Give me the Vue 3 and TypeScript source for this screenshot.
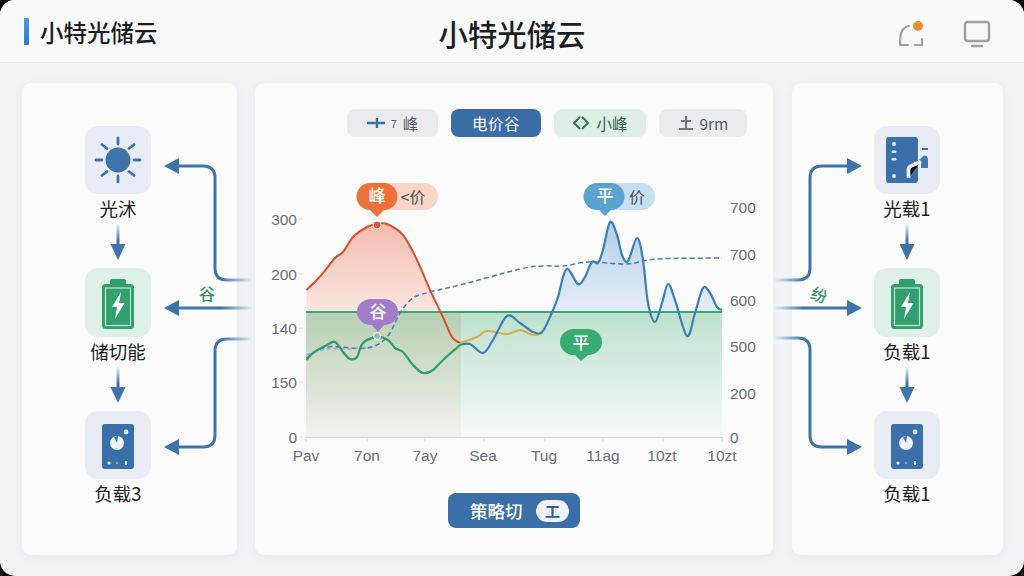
<template>
  <div class="screen">
    <header class="topbar">
      <div class="brand">
        <span class="brand-bar"></span>
        <span class="brand-name">小特光储云</span>
      </div>
      <h1 class="page-title">小特光储云</h1>
      <div class="top-actions">
        <svg class="top-icon" viewBox="0 0 28 28" width="28" height="28" fill="none" stroke="#9aa0a8" stroke-width="2.2" stroke-linecap="round">
          <path d="M3 24 Q3 15 5 11 Q7 7 12 6" />
          <path d="M3 25 H11" />
          <path d="M18 25 H25 V19" />
          <circle cx="21" cy="6" r="5" fill="#ee8f2f" stroke="none" />
        </svg>
        <svg class="top-icon" viewBox="0 0 28 28" width="28" height="28" fill="none" stroke="#9aa0a8" stroke-width="2.4">
          <rect x="2" y="2" width="24" height="19" rx="2.5" />
          <path d="M9 26 H19" stroke-linecap="round" />
        </svg>
      </div>
    </header>

    <main class="board">
      <section class="panel panel-left">
        <template v-for="(node, i) in leftNodes" :key="node.label + i">
          <div class="node-icon" :class="[node.tone, { tall: i === 1 }]">
            <svg viewBox="0 0 66 66" width="66" height="66">
              <use :href="'#' + node.icon" />
            </svg>
          </div>
          <div class="node-label">{{ node.label }}</div>
          <svg v-if="i < leftNodes.length - 1" class="down-arrow" viewBox="0 0 18 36" width="18" height="36">
            <rect x="7.5" y="0" width="3" height="21" fill="url(#fadeDown)" />
            <path d="M1.5 20 H16.5 L9 36 Z" fill="#3f73ab" />
          </svg>
        </template>
      </section>

      <section class="panel-center">
        <div class="chips">
          <div class="chip chip-grey">
            <svg viewBox="0 0 18 12" width="18" height="12"><path d="M0 6 H18 M10 1 V11" stroke="#3f6f9f" stroke-width="2.4" fill="none" /></svg>
            <span class="chip-small">7</span><span>峰</span>
          </div>
          <div class="chip chip-blue">电价谷</div>
          <div class="chip chip-green">
            <svg viewBox="0 0 18 16" width="18" height="16"><path d="M8 2 L2 8 L8 14 M10 2 L16 8 L10 14" stroke="#2c7a55" stroke-width="2" fill="none" /></svg>
            <span>小峰</span>
          </div>
          <div class="chip chip-grey">
            <svg viewBox="0 0 16 16" width="16" height="16"><path d="M8 1 V14 M3 6 H13 M1 14 H15" stroke="#6f7780" stroke-width="2" fill="none" /></svg>
            <span>9rm</span>
          </div>
        </div>

        <svg class="chart" viewBox="255 170 518 305" width="518" height="305">
          <defs>
            <linearGradient id="redFill" gradientUnits="userSpaceOnUse" x1="0" y1="224" x2="0" y2="312">
              <stop offset="0" stop-color="#f3bcae" />
              <stop offset="1" stop-color="#f9e6e1" />
            </linearGradient>
            <linearGradient id="blueFill" gradientUnits="userSpaceOnUse" x1="0" y1="222" x2="0" y2="312">
              <stop offset="0" stop-color="#b4cde8" />
              <stop offset="1" stop-color="#e6eef7" />
            </linearGradient>
            <linearGradient id="oliveFill" x1="0" y1="0" x2="0" y2="1">
              <stop offset="0" stop-color="#b8cfb2" />
              <stop offset="1" stop-color="#f3f1ee" />
            </linearGradient>
            <linearGradient id="mintFill" x1="0" y1="0" x2="0" y2="1">
              <stop offset="0" stop-color="#bde0cd" />
              <stop offset="1" stop-color="#f6fafa" />
            </linearGradient>
            <clipPath id="aboveBase"><rect x="306" y="170" width="416" height="142" /></clipPath>
          </defs>

          <rect x="306" y="312" width="155" height="125" fill="url(#oliveFill)" />
          <rect x="461" y="312" width="261" height="125" fill="url(#mintFill)" />
          <path :d="redArea" fill="url(#redFill)" clip-path="url(#aboveBase)" />
          <path :d="blueArea" fill="url(#blueFill)" clip-path="url(#aboveBase)" />

          <line x1="306" y1="312" x2="722" y2="312" stroke="#3aa872" stroke-width="1.8" />
          <line x1="306" y1="437.5" x2="722" y2="437.5" stroke="#d4d8dc" stroke-width="1.2" />
          <line v-for="x in tickX" :key="x" :x1="x" :x2="x" y1="437" y2="442" stroke="#d4d8dc" />
          <line v-for="y in leftAxis" :key="'l' + y.y" x1="299" x2="303" :y1="y.y" :y2="y.y" stroke="#dadde0" />

          <path :d="dashPath" fill="none" stroke="#4a7db5" stroke-width="1.5" stroke-dasharray="5 3" />
          <path :d="purplePath" fill="none" stroke="#b49ad2" stroke-width="1.4" stroke-dasharray="4 3" />
          <path :d="yellowPath" fill="none" stroke="#dcae3c" stroke-width="2" />
          <path :d="bluePath" fill="none" stroke="#3a80b4" stroke-width="2.2" />
          <path :d="redPath" fill="none" stroke="#d6522f" stroke-width="2" />
          <path :d="greenPath" fill="none" stroke="#2ca070" stroke-width="2.3" />

          <circle cx="377" cy="225" r="4" fill="#e2553a" stroke="#fff" stroke-width="1" />
          <circle cx="377" cy="336" r="3.5" fill="#8fc19f" stroke="#fff" stroke-width="1" />

          <rect x="357" y="183" width="81" height="27" rx="13.5" fill="#f8d6c7" />
          <path d="M370 183 H384 A13.5 13.5 0 0 1 384 210 L377 217 L370 210 A13.5 13.5 0 0 1 370 183 Z" fill="#ee7138" />
          <text class="bubble-text" x="377" y="202">峰</text>
          <text class="bubble-dark" x="413" y="203">&lt;价</text>

          <rect x="584" y="183" width="71" height="27" rx="13.5" fill="#c6dff0" />
          <path d="M597 183 H611 A13.5 13.5 0 0 1 611 210 L605 216 L599 210 H597 A13.5 13.5 0 0 1 597 183 Z" fill="#5ba3cf" />
          <text class="bubble-text" x="605" y="202">平</text>
          <text class="bubble-dark" x="637" y="203">价</text>

          <path d="M371 299 H384 A14 13 0 0 1 384 325 L378 332 L372 325 H371 A14 13 0 0 1 371 299 Z" fill="#a37cc9" />
          <text class="bubble-text" x="378" y="318">谷</text>

          <path d="M574 329 H588 A14 13 0 0 1 588 355 L581 361 L575 355 H574 A14 13 0 0 1 574 329 Z" fill="#37ab70" />
          <text class="bubble-text" x="581" y="349">平</text>

          <text v-for="y in leftAxis" :key="'lt' + y.y" class="axis-text" x="297" :y="y.y + 5.5" text-anchor="end">{{ y.t }}</text>
          <text v-for="y in rightAxis" :key="'rt' + y.y" class="axis-text" x="730" :y="y.y + 5.5">{{ y.t }}</text>
          <text v-for="l in xLabels" :key="l.x" class="axis-text" :x="l.x" y="461" text-anchor="middle">{{ l.t }}</text>
        </svg>

        <button class="strategy-btn">
          <span>策略切</span>
          <span class="strategy-pill">工</span>
        </button>
      </section>

      <section class="panel panel-right">
        <template v-for="(node, i) in rightNodes" :key="node.label + i">
          <div class="node-icon" :class="[node.tone, { tall: i === 1 }]">
            <svg viewBox="0 0 66 66" width="66" height="66">
              <use :href="'#' + node.icon" />
            </svg>
          </div>
          <div class="node-label">{{ node.label }}</div>
          <svg v-if="i < rightNodes.length - 1" class="down-arrow" viewBox="0 0 18 36" width="18" height="36">
            <rect x="7.5" y="0" width="3" height="21" fill="url(#fadeDown)" />
            <path d="M1.5 20 H16.5 L9 36 Z" fill="#3f73ab" />
          </svg>
        </template>
      </section>
    </main>

    <!-- connectors sit over the panels -->
    <svg class="links" viewBox="0 0 1024 576" width="1024" height="576" fill="none">
      <defs>
        <linearGradient id="fadeDown" x1="0" y1="0" x2="0" y2="1">
          <stop offset="0" stop-color="#3f73ab" stop-opacity="0.1" />
          <stop offset="0.8" stop-color="#3f73ab" />
        </linearGradient>
        <linearGradient id="fadeLeft" gradientUnits="userSpaceOnUse" x1="252" y1="0" x2="222" y2="0">
          <stop offset="0" stop-color="#3f73ab" stop-opacity="0.05" />
          <stop offset="1" stop-color="#3f73ab" />
        </linearGradient>
        <linearGradient id="fadeRight" gradientUnits="userSpaceOnUse" x1="775" y1="0" x2="803" y2="0">
          <stop offset="0" stop-color="#3f73ab" stop-opacity="0.05" />
          <stop offset="1" stop-color="#3f73ab" />
        </linearGradient>

        <g id="ico-sun">
          <circle cx="33" cy="33" r="12.5" fill="#3f73ab" />
          <path d="M33 11 V17 M33 49 V55 M11 33 H17 M49 33 H55 M17 17.5 L22 21.5 M49 17.5 L44 21.5 M17 48.5 L22 44.5 M49 48.5 L44 44.5" stroke="#3f73ab" stroke-width="2.8" stroke-linecap="round" />
        </g>
        <g id="ico-battery">
          <rect x="25" y="9" width="16" height="8" rx="2" fill="#32a06e" />
          <rect x="17" y="14" width="32" height="45" rx="3.5" fill="#32a06e" />
          <rect x="20.5" y="18" width="25" height="37.5" fill="none" stroke="#bfe3d0" stroke-width="1.2" />
          <path d="M36 22 L27 37 H32 L30 49 L39.5 33 H34 Z" fill="#fff" />
        </g>
        <g id="ico-disk">
          <rect x="17" y="12" width="32" height="45" rx="3" fill="#3a6fa9" />
          <circle cx="41" cy="20" r="2.4" fill="#e4edf6" />
          <circle cx="32" cy="31" r="7" fill="#eef3f9" />
          <path d="M32 31 L33 24 L29 25 Z" fill="#3a6fa9" />
          <circle cx="24" cy="51" r="1.6" fill="#e4edf6" />
          <circle cx="32" cy="51" r="1.3" fill="#7ea2c9" />
          <rect x="40" y="49" width="2" height="4" fill="#e4edf6" />
        </g>
        <g id="ico-cabinet">
          <rect x="12" y="10" width="32" height="46" rx="3" fill="#3a6fa9" />
          <circle cx="20" cy="17" r="2" fill="#dfe9f4" />
          <rect x="17.5" y="23.5" width="5" height="2.6" rx="1.3" fill="#dfe9f4" />
          <rect x="17.5" y="31" width="5" height="2.6" rx="1.3" fill="#dfe9f4" />
          <circle cx="20" cy="49" r="2" fill="#dfe9f4" />
          <rect x="48" y="21" width="6" height="2" fill="#3a6fa9" />
          <path d="M45 33 L50 28.5 Q54 28 54 33 V41 H47 V37 Z" fill="#4478b0" />
          <path d="M34.5 51 V43 Q34.5 39.5 38 38.5 L47 34.5" stroke="#e9f0f8" stroke-width="3.8" />
        </g>
      </defs>

      <g stroke-width="3">
        <path d="M252 280 H227 Q215 280 215 268 V178 Q215 166 203 166 H178" stroke="url(#fadeLeft)" />
        <path d="M252 308 H178" stroke="url(#fadeLeft)" />
        <path d="M252 339 H227 Q215 339 215 351 V435 Q215 447 203 447 H178" stroke="url(#fadeLeft)" />
        <path d="M775 280 H798 Q810 280 810 268 V178 Q810 166 822 166 H848" stroke="url(#fadeRight)" />
        <path d="M775 308 H848" stroke="url(#fadeRight)" />
        <path d="M775 338 H798 Q810 338 810 350 V435 Q810 447 822 447 H848" stroke="url(#fadeRight)" />
      </g>
      <g fill="#3f73ab">
        <path d="M164 166 L179 158 V174 Z" />
        <path d="M164 308 L179 300 V316 Z" />
        <path d="M164 447 L179 439 V455 Z" />
        <path d="M862 166 L847 158 V174 Z" />
        <path d="M862 308 L847 300 V316 Z" />
        <path d="M862 447 L847 439 V455 Z" />
      </g>
      <text class="link-text" x="207" y="300">谷</text>
      <text class="link-text" x="819" y="301" transform="rotate(20 819 295)">纷</text>
    </svg>
  </div>
</template>

<script setup lang="ts">
type Pt = [number, number];

interface FlowNode {
  label: string;
  icon: string;
  tone: "blue" | "green";
}

const leftNodes: FlowNode[] = [
  { label: "光沭", icon: "ico-sun", tone: "blue" },
  { label: "储切能", icon: "ico-battery", tone: "green" },
  { label: "负载3", icon: "ico-disk", tone: "blue" },
];

const rightNodes: FlowNode[] = [
  { label: "光载1", icon: "ico-cabinet", tone: "blue" },
  { label: "负载1", icon: "ico-battery", tone: "green" },
  { label: "负载1", icon: "ico-disk", tone: "blue" },
];

const leftAxis = [
  { y: 219, t: "300" },
  { y: 274, t: "200" },
  { y: 328, t: "140" },
  { y: 382, t: "150" },
  { y: 437, t: "0" },
];
const rightAxis = [
  { y: 207, t: "700" },
  { y: 254, t: "700" },
  { y: 300, t: "600" },
  { y: 346, t: "500" },
  { y: 393, t: "200" },
  { y: 437, t: "0" },
];
const xLabels = [
  { x: 306, t: "Pav" },
  { x: 367, t: "7on" },
  { x: 425, t: "7ay" },
  { x: 483, t: "Sea" },
  { x: 544, t: "Tug" },
  { x: 603, t: "11ag" },
  { x: 662, t: "10zt" },
  { x: 722, t: "10zt" },
];
const tickX = [306, 367, 425, 484, 545, 603, 663, 722];

const redPts: Pt[] = [
  [306.5, 290], [320, 276.5], [335, 258], [343, 252], [353, 237], [367, 227], [377, 224], [387, 224],
  [403, 235], [417, 260], [430, 290], [442, 315], [452, 337], [460, 343],
];
const greenPts: Pt[] = [
  [306.5, 360], [313, 353], [327, 345], [335, 342], [343, 352], [350, 359], [357, 357], [363, 343],
  [377, 337], [388, 340], [395, 348], [403, 352], [413, 365], [423, 373], [433, 370], [443, 360], [460, 345],
];
const bluePts: Pt[] = [
  [460, 345], [470, 344], [483, 353], [493, 340], [507, 316], [520, 323], [533, 332], [542, 332], [550, 317],
  [558, 297], [563, 277], [568, 269], [578, 284], [585, 277], [592, 262], [598, 263], [603, 250], [610, 222],
  [617, 235], [622, 255], [628, 261], [637, 238], [643, 260], [648, 303], [655, 322], [662, 303], [668, 284],
  [675, 300], [687, 336], [695, 313], [703, 288], [710, 293], [717, 307], [722, 310],
];
const yellowPts: Pt[] = [
  [460, 343], [477, 337], [487, 331], [507, 334], [520, 330], [533, 335], [543, 333],
];
const dashPts: Pt[] = [
  [306.5, 358], [327, 347], [367, 348], [387, 337], [400, 313], [413, 298], [430, 292], [460, 285], [520, 269],
  [543, 266], [563, 266], [590, 262], [627, 264], [657, 259], [722, 258],
];
const purplePts: Pt[] = [
  [306.5, 355], [327, 349], [350, 349], [367, 347],
];

// catmull-rom through the points, as cubic beziers
function smooth(pts: Pt[]): string {
  let d = `M${pts[0][0]} ${pts[0][1]}`;
  for (let i = 0; i < pts.length - 1; i++) {
    const p0 = pts[Math.max(i - 1, 0)];
    const p1 = pts[i];
    const p2 = pts[i + 1];
    const p3 = pts[Math.min(i + 2, pts.length - 1)];
    const c1x = p1[0] + (p2[0] - p0[0]) / 6;
    const c1y = p1[1] + (p2[1] - p0[1]) / 6;
    const c2x = p2[0] - (p3[0] - p1[0]) / 6;
    const c2y = p2[1] - (p3[1] - p1[1]) / 6;
    d += ` C${c1x.toFixed(1)} ${c1y.toFixed(1)} ${c2x.toFixed(1)} ${c2y.toFixed(1)} ${p2[0]} ${p2[1]}`;
  }
  return d;
}

const redPath = smooth(redPts);
const greenPath = smooth(greenPts);
const bluePath = smooth(bluePts);
const yellowPath = smooth(yellowPts);
const dashPath = smooth(dashPts);
const purplePath = smooth(purplePts);
const redArea = `${redPath} V440 H306.5 Z`;
const blueArea = `${bluePath} V440 H460 Z`;
</script>

<style>
html,
body {
  margin: 0;
  background: #000;
}
</style>

<style scoped>
.screen {
  position: relative;
  width: 1024px;
  height: 576px;
  overflow: hidden;
  border-radius: 15px;
  background: #f1f3f7;
  font-family: "Noto Sans CJK SC", "Noto Sans", sans-serif;
  color: #1b1d20;
}

.topbar {
  display: grid;
  grid-template-columns: 1fr auto 1fr;
  align-items: center;
  height: 62px;
  padding: 0 24px;
  background: #f8f9fb;
  border-bottom: 1px solid #e7e9ed;
}

.brand {
  display: flex;
  align-items: center;
  gap: 11px;
}

.brand-bar {
  width: 5px;
  height: 27px;
  border-radius: 1px;
  background: linear-gradient(#4a97ea, #2f78d2);
}

.brand-name {
  margin-top: 2px;
  font-size: 23.5px;
  font-weight: 500;
}

.page-title {
  margin: 4px 0 0;
  font-size: 29.4px;
  font-weight: 500;
}

.top-actions {
  display: flex;
  justify-content: flex-end;
  gap: 38px;
  padding: 6px 9px 0 0;
}

.board {
  display: grid;
  grid-template-columns: 215px 518px 212px;
  column-gap: 18px;
  padding: 20px 0 21px 22px;
  height: 472px;
}

.panel,
.panel-center {
  display: flex;
  flex-direction: column;
  align-items: center;
  border-radius: 9px;
  background: #fbfbfb;
  box-shadow: 0 2px 10px rgba(70, 85, 110, 0.06);
}

.panel {
  padding-top: 43px;
}

.panel-left {
  padding-right: 23px;
}

.panel-right {
  margin-left: 1px;
  padding-left: 19px;
}

.node-icon {
  display: flex;
  align-items: center;
  justify-content: center;
  width: 66px;
  height: 68px;
  border-radius: 13px;
}

.node-icon.tall {
  height: 69px;
}

.node-icon.blue {
  background: #e8edf5;
}

.node-icon.green {
  background: #dff0e8;
}

.node-label {
  margin-top: 4px;
  margin-bottom: 1px;
  height: 20px;
  line-height: 20px;
  font-size: 18.5px;
  white-space: nowrap;
}

.down-arrow {
  margin: 5px 0 8px;
}

.panel-center {
  align-items: stretch;
}

.chips {
  display: flex;
  justify-content: flex-end;
  gap: 13px;
  padding: 26px 26px 0 0;
}

.chip {
  display: flex;
  align-items: center;
  justify-content: center;
  gap: 6px;
  width: 90px;
  height: 28px;
  border-radius: 8px;
  font-size: 15.5px;
}

.chip:nth-child(1) {
  width: 91px;
}

.chip:nth-child(3) {
  width: 92px;
}

.chip:nth-child(4) {
  width: 88px;
}

.chip-grey {
  background: #e9ebef;
  color: #555c64;
}

.chip-blue {
  background: #3a6da6;
  color: #fff;
  letter-spacing: 0.5px;
}

.chip-green {
  background: #deefe5;
  color: #35604b;
}

.chip-small {
  font-size: 11px;
}

.chart {
  display: block;
  margin-top: 33px;
}

.bubble-text {
  fill: #fff;
  font-size: 17px;
  font-weight: 500;
  text-anchor: middle;
}

.bubble-dark {
  fill: #4f5257;
  font-size: 16px;
  text-anchor: middle;
}

.axis-text {
  fill: #6b6f75;
  font-size: 15.5px;
  font-family: "Liberation Sans", "Noto Sans", sans-serif;
}

.strategy-btn {
  display: flex;
  align-items: center;
  justify-content: space-between;
  align-self: center;
  box-sizing: border-box;
  width: 132px;
  height: 35px;
  margin-top: 18px;
  padding: 0 11px 0 22px;
  border: none;
  border-radius: 8px;
  background: #3b6fa8;
  color: #fff;
  font: 500 17.5px "Noto Sans CJK SC", sans-serif;
}

.strategy-pill {
  display: flex;
  align-items: center;
  justify-content: center;
  width: 33px;
  height: 22px;
  border-radius: 11px;
  background: #eef2f7;
  color: #2f5f92;
  font-size: 15px;
  font-weight: 700;
}

.links {
  position: absolute;
  top: 0;
  left: 0;
  pointer-events: none;
}

.link-text {
  fill: #2f9468;
  font-size: 16px;
  font-weight: 500;
  text-anchor: middle;
}
</style>
